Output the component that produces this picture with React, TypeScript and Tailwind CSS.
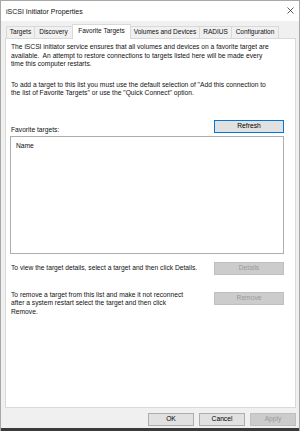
import React from "react";

const Btn = ({
  children,
  w,
  kind = "normal",
}: {
  children: React.ReactNode;
  w: string;
  kind?: "normal" | "default" | "disabled";
}) => {
  const cls =
    kind === "default"
      ? "bg-[#e1e1e1] border-[#0078d7] text-black"
      : kind === "disabled"
      ? "bg-[#cccccc] border-[#bfbfbf] text-[#9a9a9a]"
      : "bg-[#e1e1e1] border-[#adadad] text-black";
  return (
    <div
      className={`${w} h-[13px] border flex items-center justify-center shrink-0 leading-none ${cls}`}
    >
      {children}
    </div>
  );
};

export default function App() {
  const tabs = [
    { label: "Targets", w: "w-[29px]" },
    { label: "Discovery", w: "w-[39px]" },
    { label: "Favorite Targets", w: "w-[59px]", active: true },
    { label: "Volumes and Devices", w: "w-[70px]" },
    { label: "RADIUS", w: "w-[33px]" },
    { label: "Configuration", w: "w-[48px]" },
  ];
  return (
    <div className="w-[300px] h-[431px] bg-[#f0f0f0] border-x border-t border-[#a8a8a8] flex flex-col overflow-hidden font-['Liberation_Sans',Arial,sans-serif] text-[#111] text-[6.7px]">
      {/* Title bar */}
      <div className="h-[20px] bg-white flex items-center justify-between pl-[5px] pr-[5px] shrink-0">
        <span className="text-[7px] leading-none">iSCSI Initiator Properties</span>
        <svg width="7" height="7" viewBox="0 0 7 7" className="mt-[-1px]">
          <path d="M0.5 0.5 L6.5 6.5 M6.5 0.5 L0.5 6.5" stroke="#333" strokeWidth="0.8" fill="none" />
        </svg>
      </div>

      {/* Tabs */}
      <div className="h-[17px] flex items-end pl-[5px] shrink-0 text-[6.5px]">
        {tabs.map((t, i) =>
          t.active ? (
            <div
              key={i}
              className={`${t.w} h-[15px] -ml-px mb-[-1px] relative z-10 bg-white border-x border-t border-[#d9d9d9] flex items-center justify-center leading-none whitespace-nowrap pb-[1px]`}
            >
              {t.label}
            </div>
          ) : (
            <div
              key={i}
              className={`${t.w} h-[12px] ${i === 0 ? "" : "-ml-px"} bg-[#f0f0f0] border-x border-t border-[#d9d9d9] flex items-center justify-center leading-none whitespace-nowrap`}
            >
              {t.label}
            </div>
          )
        )}
      </div>

      {/* Panel */}
      <div className="ml-[4px] w-[291px] h-[370px] bg-white border border-[#d9d9d9] shrink-0 pl-[4px] pr-[11px] pt-[4px] flex flex-col leading-[8.5px]">
        <div className="pl-[1px] whitespace-pre">
          <div>The iSCSI initiator service ensures that all volumes and devices on a favorite target are</div>
          <div>available.  An attempt to restore connections to targets listed here will be made every</div>
          <div>time this computer restarts.</div>
        </div>
        <div className="pl-[1px] mt-[12px] whitespace-pre">
          <div>To add a target to this list you must use the default selection of "Add this connection to</div>
          <div>the list of Favorite Targets" or use the "Quick Connect" option.</div>
        </div>
        <div className="mt-[22px] flex items-end justify-between">
          <span className="pl-[1px] leading-none mb-[-1px]">Favorite targets:</span>
          <Btn w="w-[70px]" kind="default">Refresh</Btn>
        </div>
        <div className="mt-[3px] h-[118px] border border-[#adadad] bg-white pl-[5px] pt-[5px]">
          <span className="leading-none">Name</span>
        </div>
        <div className="mt-[8px] flex items-center justify-between">
          <span className="pl-[1px] leading-none">To view the target details, select a target and then click Details.</span>
          <Btn w="w-[70px]" kind="disabled">Details</Btn>
        </div>
        <div className="mt-[16px] flex items-start justify-between">
          <div className="pl-[1px] whitespace-pre">
            <div>To remove a target from this list and make it not reconnect</div>
            <div>after a system restart select the target and then click</div>
            <div>Remove.</div>
          </div>
          <div className="mt-[1px]">
            <Btn w="w-[70px]" kind="disabled">Remove</Btn>
          </div>
        </div>
      </div>

      {/* Bottom buttons */}
      <div className="mt-[5px] h-[14px] flex justify-end gap-[5px] pr-[3px] shrink-0">
        <Btn w="w-[46px]">OK</Btn>
        <Btn w="w-[46px]">Cancel</Btn>
        <Btn w="w-[46px]" kind="disabled">Apply</Btn>
      </div>
      <div className="mt-[1px] h-[3px] bg-[#3a3a3a] shrink-0" />
    </div>
  );
}
